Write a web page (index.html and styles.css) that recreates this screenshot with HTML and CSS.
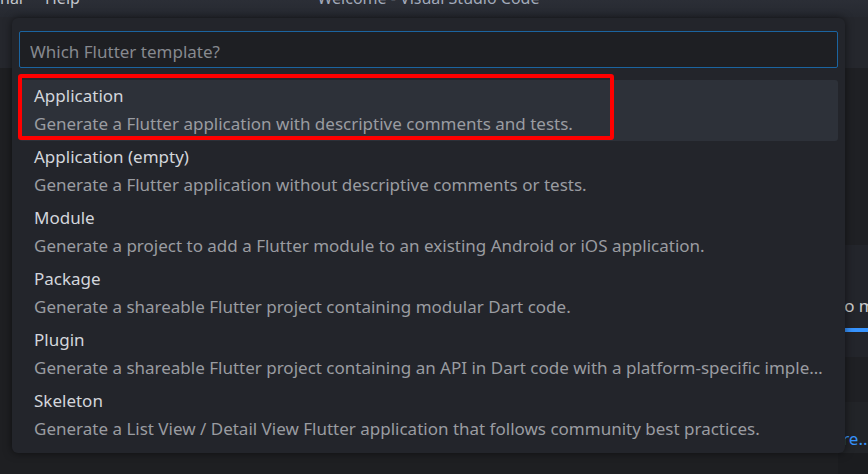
FILE: index.html
```html
<!DOCTYPE html>
<html lang="en">
<head>
<meta charset="utf-8">
<title>Welcome - Visual Studio Code</title>
<link rel="stylesheet" href="styles.css">
</head>
<body>
<div class="window">
  <header class="titlebar">
    <nav class="menus">
      <span class="menu">nal</span>
      <span class="menu">Help</span>
    </nav>
    <div class="title">Welcome - Visual Studio Code</div>
    <div></div>
  </header>
  <div class="workbench">
    <div class="tabs"></div>
    <div class="editor">
      <div class="hidden-area"></div>
      <div class="peek">
        <div class="peek-top"></div>
        <div class="peek-card">
          <span class="peek-text">to more</span>
          <div class="peek-bar"></div>
        </div>
        <div class="peek-gap"></div>
        <div class="peek-link-row"><span class="peek-link">more...</span></div>
        <div class="peek-bottom"></div>
      </div>
    </div>
    <div class="quickpick">
      <input class="qp-input" type="text" placeholder="Which Flutter template?">
      <ul class="qp-list">
        <li class="qp-item is-focused">
          <div class="qp-label">Application</div>
          <div class="qp-desc">Generate a Flutter application with descriptive comments and tests.</div>
          <div class="annot"></div>
        </li>
        <li class="qp-item">
          <div class="qp-label">Application (empty)</div>
          <div class="qp-desc">Generate a Flutter application without descriptive comments or tests.</div>
        </li>
        <li class="qp-item">
          <div class="qp-label">Module</div>
          <div class="qp-desc">Generate a project to add a Flutter module to an existing Android or iOS application.</div>
        </li>
        <li class="qp-item">
          <div class="qp-label">Package</div>
          <div class="qp-desc">Generate a shareable Flutter project containing modular Dart code.</div>
        </li>
        <li class="qp-item">
          <div class="qp-label">Plugin</div>
          <div class="qp-desc">Generate a shareable Flutter project containing an API in Dart code with a platform-specific implementation.</div>
        </li>
        <li class="qp-item">
          <div class="qp-label">Skeleton</div>
          <div class="qp-desc">Generate a List View / Detail View Flutter application that follows community best practices.</div>
        </li>
      </ul>
    </div>
  </div>
</div>
</body>
</html>
```
FILE: styles.css
```css
html, body {
  margin: 0;
  padding: 0;
}
body {
  background: #1e1f22;
  font-family: "Noto Sans", "Open Sans", sans-serif;
  overflow: hidden;
}
.window {
  width: 868px;
  height: 474px;
  display: flex;
  flex-direction: column;
}
.titlebar {
  height: 17px;
  flex: none;
  overflow: hidden;
  background: linear-gradient(#2b2e36, #262930);
  display: grid;
  grid-template-columns: 1fr auto 1fr;
  padding-right: 11px;
  font-size: 16px;
  line-height: 17px;
  color: #c3c6cc;
}
.menus {
  display: flex;
}
.menu {
  padding: 0 11px;
  margin-top: -10px;
}
.menu:first-child {
  padding-left: 0;
}
.title {
  margin-top: -10px;
  color: #a2aaba;
}
.workbench {
  flex: 1;
  position: relative;
  display: flex;
  flex-direction: column;
}
.tabs {
  height: 51px;
  flex: none;
  background: #25272d;
}
.editor {
  flex: 1;
  display: grid;
  grid-template-columns: 838px 1fr;
}
.peek {
  display: flex;
  flex-direction: column;
  overflow: hidden;
  white-space: nowrap;
  font-size: 17px;
}
.peek-top {
  height: 177px;
  background: #1f2024;
}
.peek-card {
  height: 112px;
  background: #23252b;
  display: flex;
  flex-direction: column;
  padding-top: 51px;
  box-sizing: border-box;
}
.peek-text {
  color: #cccccc;
  line-height: 20px;
}
.peek-bar {
  margin-top: 12px;
  height: 4px;
  background: #3794ff;
}
.peek-gap {
  height: 45px;
  background: #1f2024;
}
.peek-link-row {
  height: 51px;
  background: #222428;
  padding-top: 25px;
  box-sizing: border-box;
}
.peek-link {
  color: #3794ff;
  line-height: 20px;
  margin-left: -22px;
}
.peek-bottom {
  flex: 1;
  background: #1b1c1f;
}
.quickpick {
  position: absolute;
  left: 12px;
  top: 1px;
  width: 833px;
  height: 435px;
  box-sizing: border-box;
  padding: 13px 7px 7px;
  background: #23252b;
  border-radius: 6px;
  box-shadow: 0 0 8px rgba(0, 0, 0, 0.55);
  display: flex;
  flex-direction: column;
}
.qp-input {
  width: 819px;
  height: 37px;
  box-sizing: border-box;
  margin: 0;
  border: 1px solid #1b64a0;
  border-radius: 2px;
  background: #1e1f23;
  padding: 3px 10px 0;
  font-family: inherit;
  font-size: 17px;
  color: #cccccc;
  outline: none;
}
.qp-input::placeholder {
  color: #86898f;
}
.qp-list {
  list-style: none;
  margin: 12px 0 0;
  padding: 0;
}
.qp-item {
  position: relative;
  width: 819px;
  height: 61px;
  box-sizing: border-box;
  padding: 2px 14px 3px 15px;
  border-radius: 3px;
  white-space: nowrap;
}
.qp-item.is-focused {
  background: #2d3139;
}
.qp-label {
  font-size: 17px;
  line-height: 28px;
  color: #d3d6dc;
}
.qp-desc {
  font-size: 17px;
  line-height: 28px;
  color: #9a9ca1;
  overflow: hidden;
  text-overflow: ellipsis;
}
.annot {
  position: absolute;
  left: -1px;
  top: -6px;
  width: 596px;
  height: 66px;
  box-sizing: border-box;
  border: 4px solid #ff0000;
  border-radius: 3px;
}
```
